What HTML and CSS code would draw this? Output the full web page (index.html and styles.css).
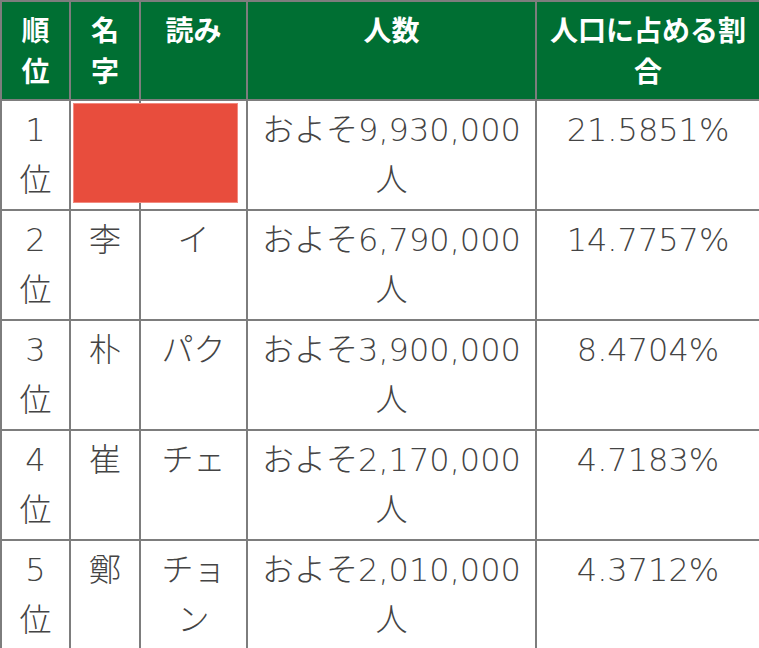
FILE: index.html
```html
<!DOCTYPE html>
<html lang="ja">
<head>
<meta charset="utf-8">
<link rel="stylesheet" href="styles.css">
</head>
<body>
<div class="wrap">
<table class="rank">
<colgroup>
<col class="c1"><col class="c2"><col class="c3"><col class="c4"><col class="c5">
</colgroup>
<thead>
<tr><th>順位</th><th>名字</th><th>読み</th><th>人数</th><th>人口に占める割合</th></tr>
</thead>
<tbody>
<tr><td>1位</td><td>金</td><td>キム</td><td>およそ9,930,000人</td><td>21.5851%</td></tr>
<tr><td>2位</td><td>李</td><td>イ</td><td>およそ6,790,000人</td><td>14.7757%</td></tr>
<tr><td>3位</td><td>朴</td><td>パク</td><td>およそ3,900,000人</td><td>8.4704%</td></tr>
<tr><td>4位</td><td>崔</td><td>チェ</td><td>およそ2,170,000人</td><td>4.7183%</td></tr>
<tr><td>5位</td><td>鄭</td><td>チョン</td><td>およそ2,010,000人</td><td>4.3712%</td></tr>
</tbody>
</table>
<div class="redact"></div>
</div>
</body>
</html>
```
FILE: styles.css
```css
html, body {
  margin: 0;
  padding: 0;
  overflow: hidden;
  background: #ffffff;
}
.wrap {
  position: relative;
  width: 761px;
}
.rank {
  table-layout: fixed;
  width: 761px;
  border-collapse: collapse;
  font-family: "DejaVu Sans", "Noto Sans CJK JP", sans-serif;
}
.c1 { width: 69px; }
.c2 { width: 70px; }
.c3 { width: 107px; }
.c4 { width: 289px; }
.c5 { width: 224px; }
.rank th, .rank td {
  border: 2px solid #7d7d7d;
  text-align: center;
  vertical-align: top;
  padding: 4px 10px;
}
.rank th {
  background: #006f33;
  color: #ffffff;
  font-family: "Noto Sans CJK JP", sans-serif;
  font-weight: 700;
  font-size: 28px;
  line-height: 41px;
  padding-top: 7px;
  height: 86px;
}
.rank td {
  color: #444444;
  font-size: 32px;
  font-weight: 300;
  line-height: 50px;
  height: 100px;
}
.redact {
  position: absolute;
  left: 73px;
  top: 103px;
  width: 163px;
  height: 98px;
  background: #e84d3d;
  border: 1px solid #f28a7f;
}
```
